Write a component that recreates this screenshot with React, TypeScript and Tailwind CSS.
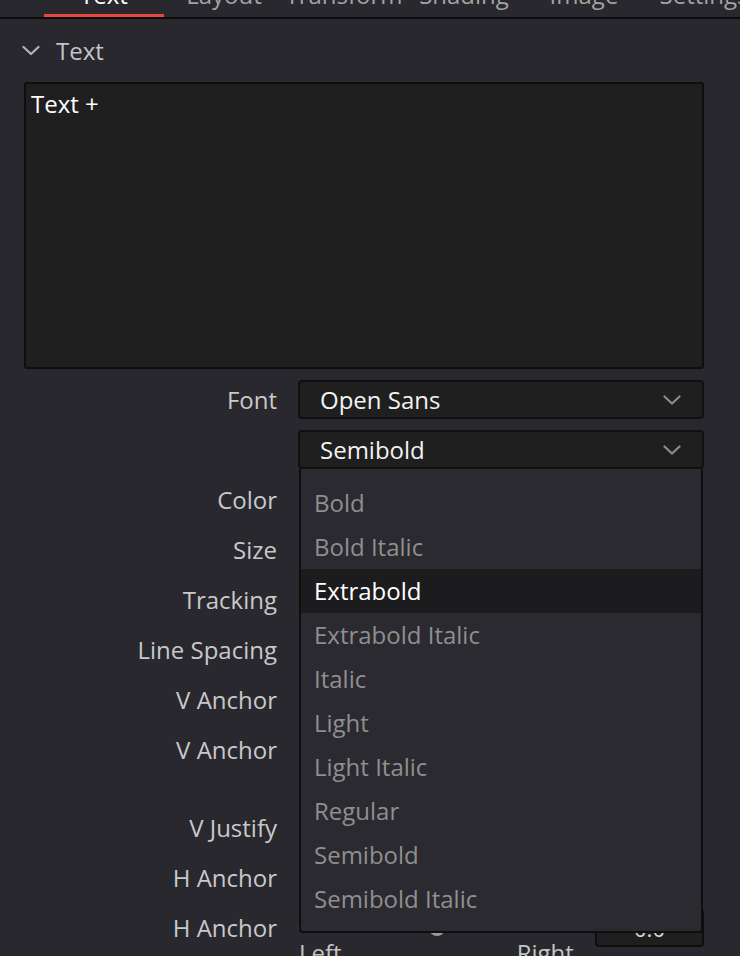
const tabs = ["Text", "Layout", "Transform", "Shading", "Image", "Settings"];

const fontStyles = [
  "Bold",
  "Bold Italic",
  "Extrabold",
  "Extrabold Italic",
  "Italic",
  "Light",
  "Light Italic",
  "Regular",
  "Semibold",
  "Semibold Italic",
];

const Chevron = ({ className }: { className?: string }) => (
  <svg viewBox="0 0 18 10" className={className} fill="none" stroke="currentColor" strokeWidth="2.2" strokeLinecap="round" strokeLinejoin="round">
    <path d="M1.5 1.5 9 8.5l7.5-7" />
  </svg>
);

const Select = ({ value }: { value: string }) => (
  <div className="flex h-[39px] w-[406px] items-center justify-between rounded-[4px] border-2 border-[#101011] bg-[#1f1f1f] pl-[20px] pr-[21px]">
    <span className="text-[24px] leading-[32px] text-[#f2f2f2]">{value}</span>
    <Chevron className="h-[10px] w-[18px] text-[#8c8c8c]" />
  </div>
);

const Row = ({ label, children }: { label: string; children?: React.ReactNode }) => (
  <div className="flex h-[50px] items-center">
    <div className="w-[277px] shrink-0 text-right text-[24px] leading-[32px] text-[#c9c9c9]">{label}</div>
    <div className="relative ml-[21px] flex h-full w-[406px] items-center">{children}</div>
  </div>
);

export default function App() {
  return (
    <div className="h-[956px] w-[740px] overflow-hidden bg-[#28282e]" style={{ fontFamily: '"Open Sans", "Noto Sans", sans-serif' }}>
      {/* tab strip, scrolled so only the bottom of the labels shows */}
      <div className="h-[19px] overflow-hidden border-b-2 border-[#0c0c0d]">
        <div className="ml-[44px] flex">
          {tabs.map((t, i) => (
            <div key={t} className="relative flex h-[17px] w-[120px] shrink-0 justify-center">
              <span className={`-mt-[21px] whitespace-nowrap text-[24px] leading-[32px] ${i === 0 ? "text-white" : "text-[#a3a3a3]"}`}>{t}</span>
              {i === 0 && <div className="absolute bottom-0 left-0 h-[3px] w-full bg-[#e5493d]" />}
            </div>
          ))}
        </div>
      </div>

      {/* section header */}
      <div className="flex h-[63px] items-center pl-[22px]">
        <Chevron className="h-[11px] w-[18px] text-[#b4b4b4]" />
        <span className="ml-[16px] text-[24px] leading-[32px] text-[#c4c4c4]">Text</span>
      </div>

      {/* text entry */}
      <div className="ml-[24px] h-[287px] w-[680px] rounded-[3px] border-2 border-[#0e0e0f] bg-[#1f1f1f] px-[5px] pt-[4px]">
        <span className="text-[24px] leading-[32px] text-white">Text +</span>
      </div>

      <div className="mt-[11px] flex flex-col">
        <div className="flex h-[39px] items-center">
          <div className="w-[277px] text-right text-[24px] leading-[32px] text-[#c9c9c9]">Font</div>
          <div className="ml-[21px]">
            <Select value="Open Sans" />
          </div>
        </div>

        <div className="relative z-10 mt-[11px] flex h-[39px] items-center">
          <div className="w-[277px]" />
          <div className="relative ml-[21px]">
            <Select value="Semibold" />
            <div className="absolute left-[1px] top-full w-[404px] rounded-b-[4px] border-2 border-t-0 border-[#0e0e0f] bg-[#2a2a30] pb-[10px] pt-[12px]">
              {fontStyles.map((s) => (
                <div
                  key={s}
                  className={`flex h-[44px] items-center pl-[13px] text-[24px] leading-[32px] ${s === "Extrabold" ? "bg-[#1c1c1e] text-white" : "text-[#8f8f8f]"}`}
                >
                  {s}
                </div>
              ))}
            </div>
          </div>
        </div>

        <div className="mt-[6px] flex flex-col">
          <Row label="Color" />
          <Row label="Size" />
          <Row label="Tracking" />
          <Row label="Line Spacing" />
          <Row label="V Anchor" />
          <Row label="V Anchor" />
          <div className="h-[28px]" />
          <Row label="V Justify" />
          <Row label="H Anchor" />
          <Row label="H Anchor">
            <div className="flex h-full w-full items-center">
              <div className="relative h-[4px] w-[278px] rounded-full bg-[#444449]">
                <div className="absolute left-[131px] top-1/2 h-[16px] w-[16px] -translate-y-1/2 rounded-full bg-[#9b9b9b]" />
              </div>
              <div className="ml-auto flex h-[38px] w-[109px] items-center justify-center rounded-[4px] border-2 border-[#0e0e0f] bg-[#1f1f1f] text-[22px] text-[#d8d8d8]">
                0.0
              </div>
            </div>
          </Row>
          <div className="-mt-[16px] flex pl-[299px] text-[24px] leading-[32px] text-[#c4c4c4]">
            <span>Left</span>
            <span className="ml-[175px]">Right</span>
          </div>
        </div>
      </div>
    </div>
  );
}
